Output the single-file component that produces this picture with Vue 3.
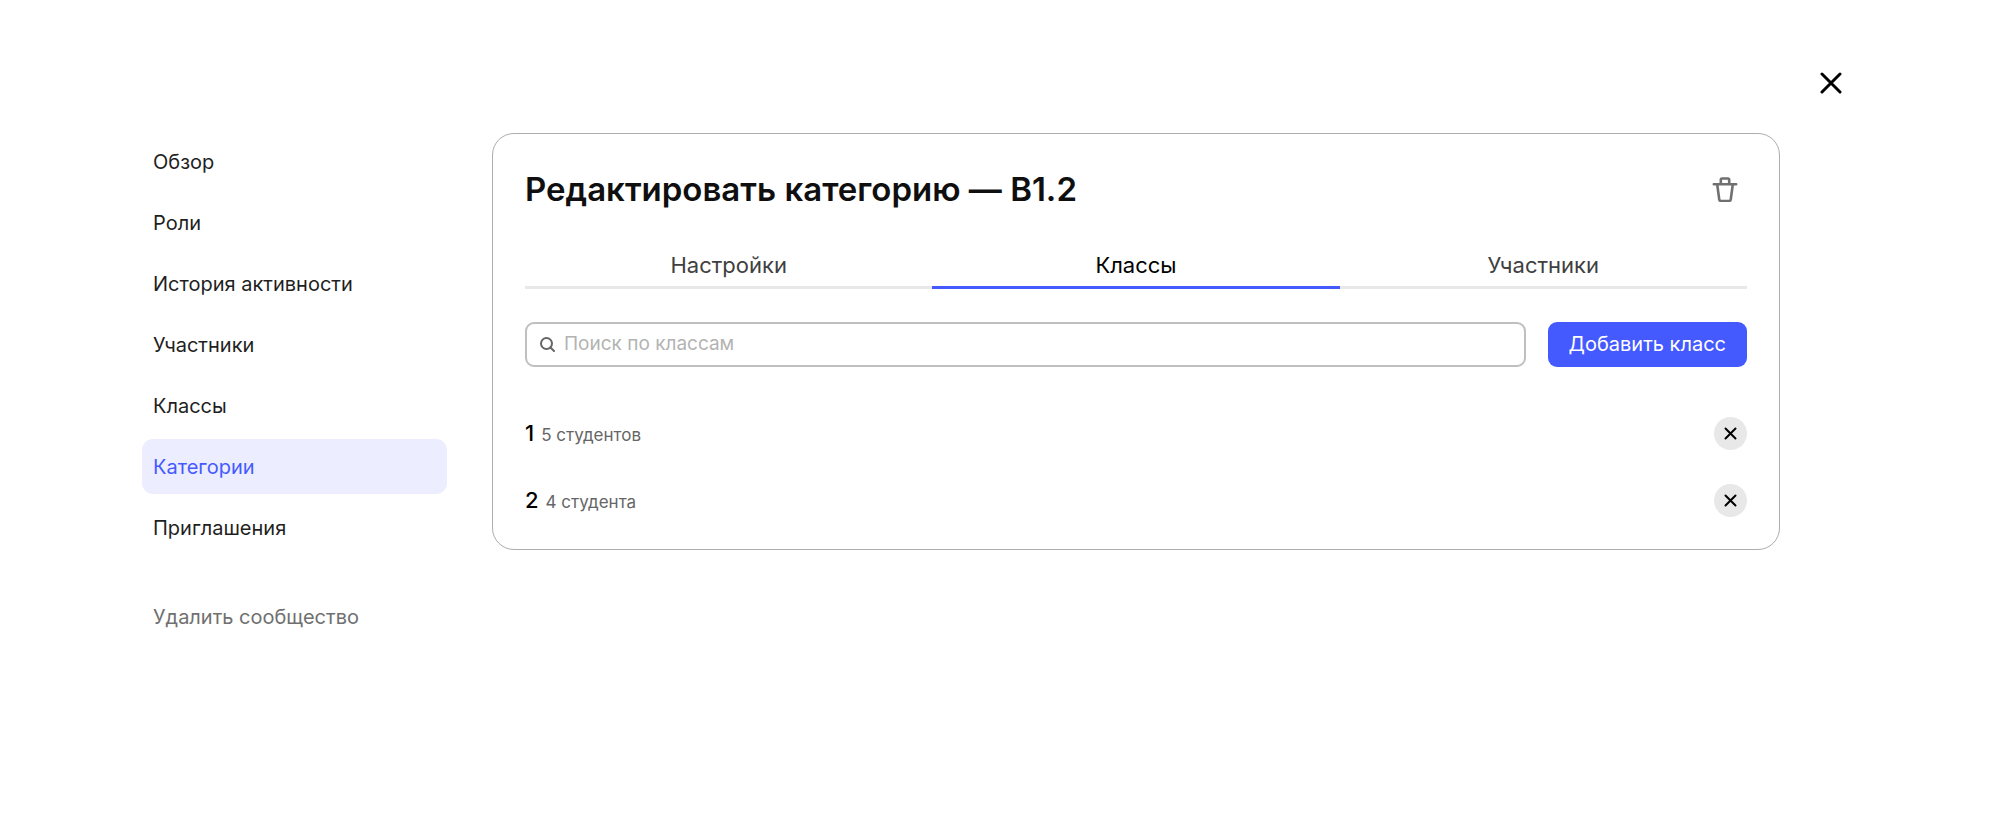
<script setup>
import { ref } from 'vue'

const sections = ['Обзор', 'Роли', 'История активности', 'Участники', 'Классы', 'Категории', 'Приглашения']
const activeSection = ref('Категории')

const tabs = ['Настройки', 'Классы', 'Участники']
const activeTab = ref('Классы')

const query = ref('')
const classes = ref([
  { name: '1', students: '5 студентов' },
  { name: '2', students: '4 студента' },
])

function removeClass(item) {
  classes.value = classes.value.filter((c) => c !== item)
}
</script>

<template>
  <div class="page">
    <nav class="sidebar">
      <a
        v-for="section in sections"
        :key="section"
        href="#"
        class="nav-item"
        :class="{ active: section === activeSection }"
        @click.prevent="activeSection = section"
      >{{ section }}</a>
      <button type="button" class="nav-item delete">Удалить сообщество</button>
    </nav>

    <main class="panel">
      <header class="panel-header">
        <h1 class="title">Редактировать категорию — B1.2</h1>
        <button type="button" class="icon-button trash" aria-label="Удалить категорию">
          <svg viewBox="0 0 26 26" width="26" height="26" aria-hidden="true">
            <path d="M1.800 8.300H24.200M8.800 8V3.800Q8.800 2.500 10.100 2.500H15.900Q17.200 2.500 17.200 3.800V8M5.200 8.300L7.200 23.200Q7.500 25 9.300 25H16.700Q18.500 25 18.800 23.200L20.800 8.300" />
          </svg>
        </button>
      </header>

      <div class="tabs" role="tablist">
        <button
          v-for="tab in tabs"
          :key="tab"
          type="button"
          role="tab"
          class="tab"
          :class="{ active: tab === activeTab }"
          :aria-selected="tab === activeTab"
          @click="activeTab = tab"
        >{{ tab }}</button>
      </div>

      <div class="toolbar">
        <label class="search">
          <svg viewBox="0 0 15 15" width="15" height="15" aria-hidden="true">
            <circle cx="6.500" cy="6.500" r="5.500" />
            <path d="M10.500 10.500L14 14" />
          </svg>
          <input v-model="query" type="text" placeholder="Поиск по классам" aria-label="Поиск по классам" />
        </label>
        <button type="button" class="add">Добавить класс</button>
      </div>

      <ul class="classes">
        <li v-for="item in classes" :key="item.name" class="class-row">
          <div class="class-info">
            <span class="class-name">{{ item.name }}</span>
            <span class="class-meta">{{ item.students }}</span>
          </div>
          <button type="button" class="remove" aria-label="Убрать класс" @click="removeClass(item)">
            <svg viewBox="0 0 13 13" width="13" height="13" aria-hidden="true">
              <path d="M1.500 1.500L11.500 11.500M11.500 1.500L1.500 11.500" />
            </svg>
          </button>
        </li>
      </ul>
    </main>

    <button type="button" class="icon-button close" aria-label="Закрыть">
      <svg viewBox="0 0 22 22" width="22" height="22" aria-hidden="true">
        <path d="M2 2L20 20M20 2L2 20" />
      </svg>
    </button>
  </div>
</template>

<style>
body {
  background: #fff;
}
</style>

<style scoped>
.page {
  display: flex;
  align-items: flex-start;
  padding: 61px 147px 40px 142px;
  font-family: Inter, "Liberation Sans", sans-serif;
  font-size: 20px;
  line-height: 26px;
  color: #1f1f1f;
}

button,
input {
  font: inherit;
  color: inherit;
  border: 0;
  padding: 0;
  margin: 0;
  background: none;
}

button {
  cursor: pointer;
}

svg {
  display: block;
  flex: none;
  fill: none;
  stroke: currentColor;
  stroke-linecap: round;
  stroke-linejoin: round;
}

.sidebar {
  flex: none;
  display: flex;
  flex-direction: column;
  gap: 6px;
  width: 305px;
  margin-top: 73px;
}

.nav-item {
  display: flex;
  align-items: center;
  height: 55px;
  padding: 0 11px;
  border-radius: 11px;
  color: inherit;
  text-decoration: none;
}

.nav-item.active {
  background: #eceeff;
  color: #445aff;
}

.nav-item.delete {
  margin-top: 28px;
  color: #707070;
}

.panel {
  flex: 1;
  min-width: 0;
  margin: 72px 29px 0 45px;
  padding: 32px;
  border: 1px solid #adadad;
  border-radius: 22px;
}

.panel-header {
  display: flex;
  align-items: center;
  justify-content: space-between;
  height: 46px;
}

.title {
  margin: 0;
  font-size: 33px;
  line-height: 44px;
  font-weight: 600;
  color: #0f0f0f;
}

.icon-button {
  flex: none;
  display: flex;
  align-items: center;
  justify-content: center;
  width: 44px;
  height: 44px;
}

.trash {
  color: #707070;
}

.trash svg {
  stroke-width: 2.6;
}

.tabs {
  display: flex;
  margin-top: 34px;
}

.tab {
  flex: 1;
  padding: 4px 0 6px;
  border-bottom: 3px solid #e8e8e8;
  font-size: 22px;
  line-height: 30px;
  color: #404040;
}

.tab.active {
  border-color: #445aff;
  color: #000;
}

.toolbar {
  display: flex;
  gap: 22px;
  margin-top: 33px;
}

.search {
  flex: 1;
  display: flex;
  align-items: center;
  gap: 9px;
  height: 45px;
  padding: 0 13px;
  box-sizing: border-box;
  border: 2px solid #bfbfbf;
  border-radius: 9px;
  color: #666;
}

.search svg {
  stroke-width: 2;
}

.search input {
  flex: 1;
  min-width: 0;
  padding-bottom: 2px;
  outline: none;
  font-size: 19px;
  color: #1f1f1f;
}

.search input::placeholder {
  color: #b3b3b3;
  opacity: 1;
}

.add {
  height: 45px;
  padding: 0 21px 2px;
  border-radius: 9px;
  background: #445aff;
  color: #fff;
}

.classes {
  display: flex;
  flex-direction: column;
  gap: 34px;
  margin: 50px 0 0;
  padding: 0;
  list-style: none;
}

.class-row {
  display: flex;
  align-items: center;
  justify-content: space-between;
}

.class-info {
  display: flex;
  align-items: baseline;
  gap: 7px;
}

.class-name {
  font-size: 22px;
  font-weight: 500;
  color: #000;
}

.class-meta {
  font-size: 17px;
  color: #666;
}

.remove {
  display: flex;
  align-items: center;
  justify-content: center;
  width: 33px;
  height: 33px;
  border-radius: 50%;
  background: #e8e8e8;
  color: #000;
}

.remove svg {
  stroke-width: 2;
}

.close {
  color: #000;
}

.close svg {
  stroke-width: 3;
}
</style>
